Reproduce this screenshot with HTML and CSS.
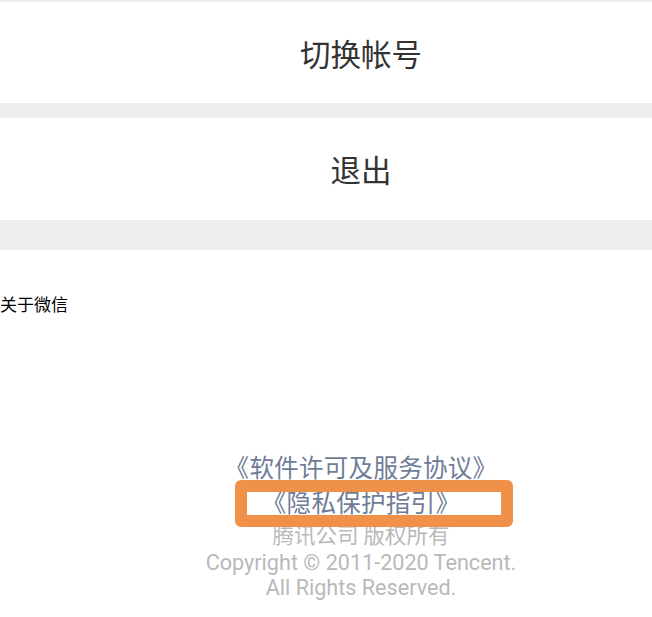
FILE: index.html
```html
<!DOCTYPE html>
<html lang="zh-CN">
<head>
<meta charset="utf-8">
<title>设置</title>
<link rel="stylesheet" href="styles.css">
</head>
<body>
<div class="strip"></div>
<div class="row row-switch"><span>切换帐号</span></div>
<div class="gap"></div>
<div class="row row-exit"><span>退出</span></div>
<div class="gap gap-big"></div>
<div class="about">关于微信</div>
<div class="footer">
  <div class="link">《软件许可及服务协议》</div>
  <div class="link">《隐私保护指引》</div>
  <div class="owner">腾讯公司 版权所有</div>
  <div class="copy copy-first">Copyright © 2011-2020 Tencent.</div>
  <div class="copy">All Rights Reserved.</div>
</div>
<div class="highlight"></div>
</body>
</html>
```
FILE: styles.css
```css
html, body {
  margin: 0;
  padding: 0;
  background: #ffffff;
}
body {
  position: relative;
  width: 652px;
  height: 617px;
  overflow: hidden;
  font-family: "Noto Sans CJK SC", "Noto Sans", sans-serif;
}
.strip {
  height: 2px;
  background: #ededed;
}
.row {
  display: flex;
  align-items: center;
  justify-content: center;
  padding-left: 70px;
  font-size: 30.5px;
  color: #333333;
  background: #ffffff;
}
.row-switch {
  height: 101px;
}
.row-exit {
  height: 102px;
}
.gap {
  height: 15px;
  background: #ededed;
}
.gap-big {
  height: 30px;
}
.about {
  margin-top: 42px;
  font-size: 17px;
  line-height: 24px;
  color: #000000;
}
.footer {
  margin-top: 133px;
  padding-left: 70px;
  text-align: center;
}
.link {
  font-size: 24.5px;
  line-height: 35px;
  letter-spacing: 0.3px;
  color: #6f7c97;
}
.owner {
  margin-top: 2px;
  font-size: 21.5px;
  line-height: 26px;
  color: #b9b9b9;
}
.copy {
  font-family: Roboto, "Noto Sans CJK SC", sans-serif;
  font-size: 21.6px;
  line-height: 25px;
  color: #b9b9b9;
}
.copy-first {
  margin-top: 3px;
}
.copy-first + .copy {
  line-height: 26px;
}
.highlight {
  position: absolute;
  left: 235px;
  top: 480px;
  width: 278px;
  height: 47px;
  box-sizing: border-box;
  border: 12px solid #f0914a;
  border-radius: 6px;
}
```
